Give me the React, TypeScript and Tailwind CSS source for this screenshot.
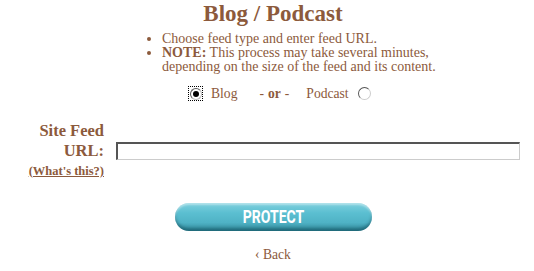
import React from "react";

export default function App() {
  return (
    <div className="w-[534px] h-[271px] bg-white text-[#8c5a3c] font-['Liberation_Serif',serif] flex flex-col items-center overflow-hidden pl-[12px]">
      <h1 className="mt-[2px] text-[23px] leading-[24px] font-bold">Blog / Podcast</h1>
      <ul className="mt-[6px] list-disc pl-[12px] text-[14px] leading-[14px] self-start ml-[138px]">
        <li>Choose feed type and enter feed URL.</li>
        <li>
          <b>NOTE:</b> This process may take several minutes,
          <br />
          depending on the size of the feed and its content.
        </li>
      </ul>
      <div className="mt-[12px] self-start ml-[176px] flex items-center text-[13.6px] leading-[14px]">
        <span className="w-[15px] h-[15px] border border-dotted border-black flex items-center justify-center">
          <span className="w-[12px] h-[12px] rounded-full border border-[#555] border-r-[#bbb] border-b-[#bbb] flex items-center justify-center">
            <span className="w-[6px] h-[6px] rounded-full bg-black" />
          </span>
        </span>
        <span className="ml-[8px]">Blog</span>
        <span className="ml-[22px] flex">
          <span>-</span>
          <b className="mx-[4px]">or</b>
          <span>-</span>
        </span>
        <span className="ml-[17px]">Podcast</span>
        <span className="ml-[9px] w-[13px] h-[13px] rounded-full border border-[#555] border-r-[#ccc] border-b-[#ccc]" />
      </div>
      <div className="mt-[20px] self-stretch flex -ml-[12px]">
        <div className="w-[104px] flex flex-col items-end font-bold">
          <span className="text-[16.5px] leading-[20px]">Site Feed</span>
          <span className="text-[16.5px] leading-[20px]">URL:</span>
          <a className="text-[12.5px] leading-[20px] underline">(What's this?)</a>
        </div>
        <div className="ml-[12px] mt-[21px] w-[404px] h-[18px] border-2 border-t-[#555] border-l-[#555] border-r-[#ccc] border-b-[#ccc] border-r-1 border-b-1 bg-white" />
      </div>
      <button className="mt-[22px] w-[197px] h-[28px] rounded-full bg-[linear-gradient(to_bottom,#7fd0de_0%,#5bbfd1_35%,#4fb2c5_70%,#2f8799_100%)] shadow-[inset_0_-3px_3px_rgba(0,50,60,0.35),inset_0_2px_2px_rgba(255,255,255,0.4)] text-white font-['Roboto',sans-serif] font-bold text-[18px] leading-[28px] flex items-center justify-center">
        <span className="inline-block scale-x-[0.78]">PROTECT</span>
      </button>
      <div className="mt-[17px] text-[13.6px] leading-[14px]">‹ Back</div>
    </div>
  );
}
